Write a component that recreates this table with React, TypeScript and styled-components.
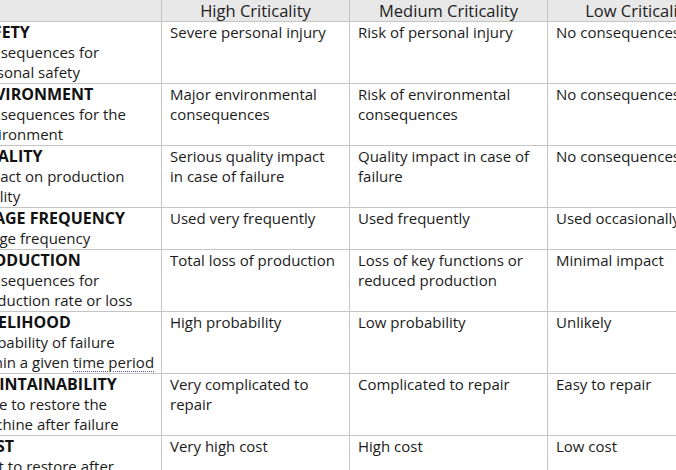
import React from "react";
import styled, { createGlobalStyle } from "styled-components";

const Global = createGlobalStyle`
  html, body { margin: 0; padding: 0; background: #ffffff; }
  body { overflow: hidden; width: 676px; height: 470px; }
`;

const Grid = styled.div`
  display: grid;
  grid-template-columns: 197px 188px 198px 182px;
  margin-left: -35px;
  width: max-content;
  font-family: "Open Sans", "Liberation Sans", sans-serif;
  font-size: 15px;
  line-height: 20px;
  color: #1b1b1b;
`;

const HeadCell = styled.div`
  background: #e8e8e8;
  border-right: 1px solid #c4c4c4;
  border-bottom: 1px solid #c4c4c4;
  height: 21px;
  line-height: 21px;
  text-align: center;
  font-size: 16.5px;
  color: #222;
  white-space: nowrap;
  overflow: hidden;
`;

const Cell = styled.div`
  border-right: 1px solid #c4c4c4;
  border-bottom: 1px solid #c4c4c4;
  padding: 0 8px 1px 8px;
  white-space: pre-line;
`;

const Title = styled.div`
  font-weight: 700;
  font-size: 16px;
  color: #111;
  white-space: nowrap;
`;

const Desc = styled.div`
  white-space: nowrap;
`;

const Mark = styled.span`
  text-decoration: underline dotted #5a5ab0;
  text-underline-offset: 3px;
  text-decoration-thickness: 1px;
`;

type Row = { title: string; desc: React.ReactNode[]; high: string; med: string; low: string };

const rows: Row[] = [
  { title: "SAFETY", desc: ["Consequences for", "personal safety"], high: "Severe personal injury", med: "Risk of personal injury", low: "No consequences" },
  { title: "ENVIRONMENT", desc: ["Consequences for the", "environment"], high: "Major environmental\nconsequences", med: "Risk of environmental\nconsequences", low: "No consequences" },
  { title: "QUALITY", desc: ["Impact on production", "quality"], high: "Serious quality impact\nin case of failure", med: "Quality impact in case of\nfailure", low: "No consequences" },
  { title: "USAGE FREQUENCY", desc: ["Usage frequency"], high: "Used very frequently", med: "Used frequently", low: "Used occasionally" },
  { title: "PRODUCTION", desc: ["Consequences for", "production rate or loss"], high: "Total loss of production", med: "Loss of key functions or\nreduced production", low: "Minimal impact" },
  { title: "LIKELIHOOD", desc: ["Probability of failure", <>within a given <Mark>time period</Mark></>], high: "High probability", med: "Low probability", low: "Unlikely" },
  { title: "MAINTAINABILITY", desc: ["Time to restore the", "machine after failure"], high: "Very complicated to\nrepair", med: "Complicated to repair", low: "Easy to repair" },
  { title: "COST", desc: ["Cost to restore after", "failure"], high: "Very high cost", med: "High cost", low: "Low cost" },
];

export default function App() {
  return (
    <>
      <Global />
      <Grid>
        <HeadCell />
        <HeadCell>High Criticality</HeadCell>
        <HeadCell>Medium Criticality</HeadCell>
        <HeadCell>Low Criticality</HeadCell>
        {rows.map((r) => (
          <React.Fragment key={r.title}>
            <Cell>
              <Title>{r.title}</Title>
              {r.desc.map((d, i) => (
                <Desc key={i}>{d}</Desc>
              ))}
            </Cell>
            <Cell>{r.high}</Cell>
            <Cell>{r.med}</Cell>
            <Cell>{r.low}</Cell>
          </React.Fragment>
        ))}
      </Grid>
    </>
  );
}
